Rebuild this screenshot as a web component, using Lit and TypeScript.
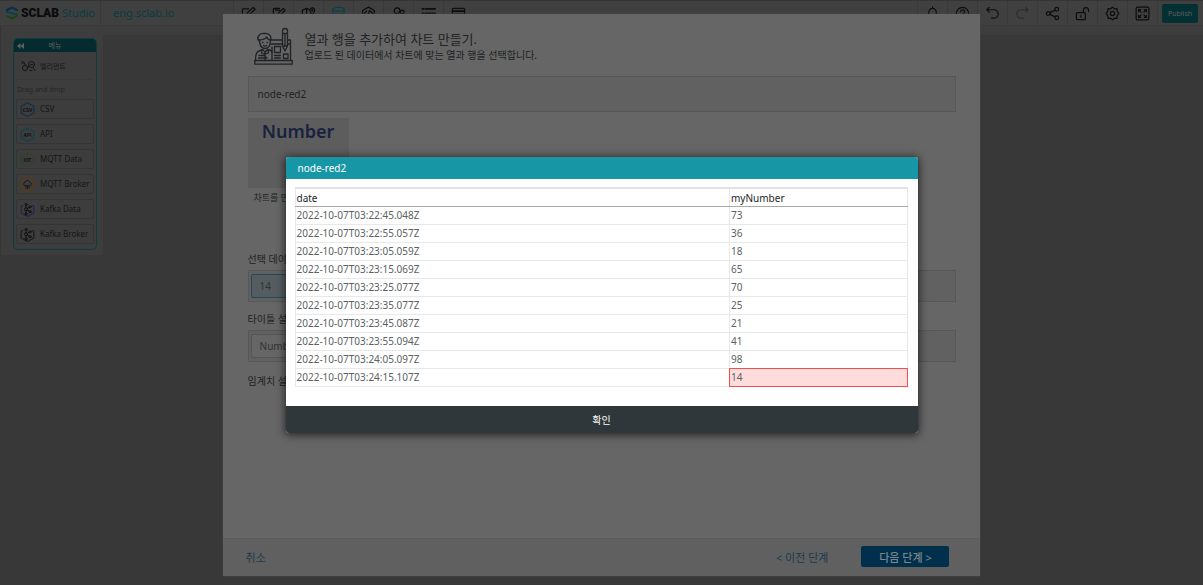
import { LitElement, html, css, svg } from "lit";
import { customElement } from "lit/decorators.js";
import { classMap } from "lit/directives/class-map.js";

type Row = { date: string; value: number };

const ROWS: Row[] = [
  { date: "2022-10-07T03:22:45.048Z", value: 73 },
  { date: "2022-10-07T03:22:55.057Z", value: 36 },
  { date: "2022-10-07T03:23:05.059Z", value: 18 },
  { date: "2022-10-07T03:23:15.069Z", value: 65 },
  { date: "2022-10-07T03:23:25.077Z", value: 70 },
  { date: "2022-10-07T03:23:35.077Z", value: 25 },
  { date: "2022-10-07T03:23:45.087Z", value: 21 },
  { date: "2022-10-07T03:23:55.094Z", value: 41 },
  { date: "2022-10-07T03:24:05.097Z", value: 98 },
  { date: "2022-10-07T03:24:15.107Z", value: 14 },
];

// Toolbar glyphs, drawn on a 16 x 16 grid.
const glyphs = {
  edit: svg`<path d="M8 3H2.500a1 1 0 0 0-1 1v9.500a1 1 0 0 0 1 1H12a1 1 0 0 0 1-1V9M6 10l.6-2.600L13 1.500l2 2L8.500 9.500z"/>`,
  form: svg`<path d="M9 2.500H3.500a1 1 0 0 0-1 1v10a1 1 0 0 0 1 1h9a1 1 0 0 0 1-1V9M5 2.500v2h4M7.500 10l.6-2.600L13 2.500l2 2L10 9.500z"/>`,
  map: svg`<path d="M9 4 6 2.500 1.500 4.500v9L6 12l4 2 4.500-2V9.500M6 2.500V12M10 9v5M12 9.500C10.500 7.500 9.500 6 9.500 4.500a2.500 2.500 0 0 1 5 0c0 1.500-1 3-2.500 5z"/><circle cx="12" cy="4.500" r=".6"/>`,
  data: svg`<ellipse cx="8" cy="3.500" rx="6" ry="2"/><path d="M2 3.500v9c0 1.200 2.600 2 6 2s6-.8 6-2v-9M2 6.500c0 1.200 2.600 2 6 2s6-.8 6-2M2 9.500c0 1.200 2.600 2 6 2s6-.8 6-2"/>`,
  code: svg`<path d="m8 1.200 6.200 3.500v6.600L8 14.800l-6.200-3.500V4.700zM5.800 5.500 3.800 8l2 2.500M10.200 5.500l2 2.500-2 2.500M9 5l-2 6"/>`,
  users: svg`<circle cx="6.500" cy="5" r="3"/><circle cx="12" cy="6.500" r="2"/><path d="M1.500 14c0-3.500 2-5 5-5s5 1.500 5 5zM11 10c2.500-.3 4 1.200 4 4h-2"/>`,
  list: svg`<path class="bold" d="M1.500 3h1.500M5 3h10M1.500 8H3M5 8h10M1.500 13H3M5 13h10"/>`,
  card: svg`<rect x="1.500" y="2.500" width="13" height="11" rx="1"/><path class="bold" d="M2 5.500h12M4 9h4M10 9h2.500"/>`,
  bell: svg`<path d="M2.500 12.500h11c-1.500-1.500-1.500-3-1.500-5.500 0-2.500-1.500-4.500-4-4.500S4 4.500 4 7c0 2.500 0 4-1.500 5.500zM8 2.500V1M6.500 14.500h3"/>`,
  help: svg`<circle cx="8" cy="8" r="6.500"/><path d="M5.800 6.300C5.800 3.300 10.200 3.500 10.200 6.300 10.200 7.800 8 8 8 9.500M8 11v1.200"/>`,
  undo: svg`<path d="M4.500 1.500 2 4l2.500 2.500M2 4h7.500a4.500 4.500 0 0 1 0 9H7"/>`,
  redo: svg`<path d="M11.500 1.500 14 4l-2.500 2.500M14 4H6.500a4.500 4.500 0 0 0 0 9H9"/>`,
  share: svg`<circle cx="3.500" cy="8" r="2"/><circle cx="12.500" cy="3.500" r="2"/><circle cx="12.500" cy="12.500" r="2"/><path d="m5.300 7.100 5.400-2.700M5.300 8.900l5.400 2.700"/>`,
  unlock: svg`<rect x="1.500" y="7" width="9.500" height="7.500" rx="1"/><path d="M9 7V4.500a2.700 2.700 0 0 1 5.400 0V6M6.200 10v1.800"/>`,
  gear: svg`<circle cx="8" cy="8" r="2.200"/><path d="M8 1.200 10 3l2.800-.1L13 5.800 14.800 8 13 10.200l-.2 2.900L10 13l-2 1.800L6 13l-2.800.1-.2-2.900L1.200 8 3 5.800l.2-2.900L6 3z"/>`,
  full: svg`<rect x="1.200" y="1.200" width="13.600" height="13.600" rx="1.500"/><path d="M3.800 6V3.800H6M10 3.800h2.200V6M12.200 10v2.200H10M6 12.200H3.800V10M4 4l2.500 2.500M12 4 9.500 6.500M12 12 9.500 9.500M4 12l2.500-2.500"/>`,
};
type Glyph = keyof typeof glyphs;

const MAIN_TOOLS: [Glyph, string][] = [
  ["edit", "Edit"], ["form", "Form"], ["map", "Map"], ["data", "Data"],
  ["code", "Code"], ["users", "Users"], ["list", "List"], ["card", "Card"],
];
const SIDE_TOOLS: [Glyph, string][] = [
  ["bell", "Notifications"], ["help", "Help"], ["undo", "Undo"], ["redo", "Redo"],
  ["share", "Share"], ["unlock", "Lock"], ["gear", "Settings"], ["full", "Full screen"],
];

const SOURCES = [
  { label: "CSV", tone: "#172f49", kind: "CSV" },
  { label: "API", tone: "#123f4c", kind: "API" },
  { label: "MQTT Data", tone: "#2a4524", kind: "IOT" },
  { label: "MQTT Broker", tone: "#5b3a14", kind: "cloud" },
  { label: "Kafka Data", tone: "#24264f", kind: "kafka" },
  { label: "Kafka Broker", tone: "#1d1d1d", kind: "kafka" },
];

const base = css`
  :host {
    box-sizing: border-box;
    font-family: "Noto Sans", "Noto Sans CJK KR", sans-serif;
  }
  *,
  *::before,
  *::after {
    box-sizing: border-box;
  }
  button {
    font: inherit;
    border: 0;
    padding: 0;
    background: none;
    color: inherit;
  }
  svg {
    display: block;
    flex: none;
    fill: none;
    stroke: currentColor;
    stroke-linecap: round;
    stroke-linejoin: round;
  }
`;

@customElement("top-bar")
class TopBar extends LitElement {
  static styles = [
    base,
    css`
      :host {
        display: flex;
        align-items: stretch;
        height: 26px;
        background: #404040;
        border-top: 1px solid #353535;
        border-bottom: 1px solid #3a3a3a;
        color: #0d0d0d;
      }
      .logo {
        display: flex;
        flex: none;
        align-items: center;
        gap: 3px;
        width: 101px;
        padding-left: 6px;
        border-right: 1px solid #383838;
      }
      .name {
        font: 900 12px/24px Roboto, "Liberation Sans", sans-serif;
        color: #0a0a0a;
      }
      .studio,
      .site {
        font-size: 11px;
        line-height: 24px;
        color: #073d42;
      }
      .site {
        flex: none;
        width: 132px;
        padding-left: 12px;
        text-decoration: none;
      }
      .tools {
        display: flex;
      }
      .tools button {
        display: grid;
        place-items: center;
        width: 30px;
        border-left: 1px solid #393939;
      }
      .tools .active {
        color: #0a4147;
      }
      .tools .off {
        color: #2c2c2c;
      }
      .right {
        margin-left: auto;
      }
      .bold {
        stroke-width: 2;
      }
      .end {
        display: flex;
        align-items: center;
        padding: 0 5px 0 4px;
        border-left: 1px solid #393939;
      }
      .publish {
        width: 36px;
        height: 19px;
        border-radius: 2px;
        background: #042f33;
        color: #5a6060;
        font-size: 7px;
      }
    `,
  ];

  private tool([name, label]: [Glyph, string]) {
    return html`<button aria-label=${label} class=${classMap({ active: name === "data", off: name === "redo" })}>
      <svg width="15" height="15" viewBox="0 0 16 16" stroke-width="1.300">${glyphs[name]}</svg>
    </button>`;
  }

  render() {
    return html`
      <div class="logo">
        <svg width="12" height="14" viewBox="0 0 12 14" stroke-width="2">
          <path stroke="#0c2c4c" d="M11 4 6 1.500 1 4v2" />
          <path stroke="#07434a" d="M1 6l10 2.500" />
          <path stroke="#214018" d="M11 8.500v1.500l-5 2.500-5-2.500" />
        </svg>
        <span class="name">SCLAB</span>
        <span class="studio">Studio</span>
      </div>
      <a class="site" href="#">eng.sclab.io</a>
      <div class="tools">${MAIN_TOOLS.map((t) => this.tool(t))}</div>
      <div class="tools right">${SIDE_TOOLS.map((t) => this.tool(t))}</div>
      <div class="end"><button class="publish">Publish</button></div>
    `;
  }
}

@customElement("side-menu")
class SideMenu extends LitElement {
  static styles = [
    base,
    css`
      :host {
        display: block;
        width: 103px;
        padding: 12px 6px 5px 12px;
        background: #3d3d3d;
        color: #151515;
        border-left: 1px solid #353535;
      }
      .panel {
        border: 1px solid #0d3c41;
        border-radius: 5px;
        overflow: hidden;
      }
      .head {
        display: grid;
        grid-template-columns: 10px 1fr 10px;
        align-items: center;
        height: 13px;
        padding: 0 3px;
        background: #052b2e;
        color: #5c6161;
        font-size: 7px;
        line-height: 13px;
        text-align: center;
      }
      .element {
        display: flex;
        align-items: center;
        gap: 4px;
        height: 28px;
        margin: 0 3px;
        padding-left: 4px;
        border-bottom: 1px solid #383838;
        font-size: 7px;
      }
      .hint {
        height: 19px;
        padding-left: 3px;
        color: #252525;
        font-size: 7px;
        line-height: 20px;
      }
      .list {
        display: flex;
        flex-direction: column;
        gap: 5px;
        padding: 0 2px 5px;
      }
      .item {
        display: flex;
        align-items: center;
        gap: 5px;
        height: 20px;
        padding-left: 3px;
        border: 1px solid #343434;
        border-radius: 2px;
        font-size: 8px;
        line-height: 18px;
      }
      .mark {
        font: bold 5px Roboto, "Liberation Sans", sans-serif;
        fill: #111;
        stroke: none;
        text-anchor: middle;
      }
    `,
  ];

  private badge(kind: string, tone: string) {
    const inner =
      kind === "cloud"
        ? svg`<path stroke="#111" stroke-width=".8" d="M4.500 8.500a1.700 1.700 0 0 1 .6-3.200 2.500 2.500 0 0 1 4.800 0 1.700 1.700 0 0 1 .6 3.200zM6 9.500v1.500M7.500 9.500v2M9 9.500v1.500"/>`
        : kind === "kafka"
          ? svg`<g stroke="#111"><circle cx="6" cy="2.500" r="1.100"/><circle cx="6" cy="7.200" r="1.500"/><circle cx="6" cy="12" r="1.100"/><circle cx="10" cy="4.800" r="1.100"/><circle cx="10" cy="9.700" r="1.100"/><path d="M6 3.700v1.900M6 8.800v2M7.400 6.400 9 5.400M7.400 8 9 9.100"/></g>`
          : svg`<text class="mark" x="7.500" y="9.500">${kind}</text>`;
    const frame =
      kind === "kafka"
        ? "M2.500 3.500 1.200 4.300v6.700l6.300 3.500 6.300-3.500V4.300L12.500 3.500"
        : kind === "API" || kind === "IOT"
          ? "M4.500 2.500 1.200 4.300v6.700l6.300 3.500 6.300-3.500V4.300l-3.300-1.800M7.500 3.500V1M6.500 2l1-1 1 1"
          : "M7.500.8l6.300 3.500v6.700l-6.300 3.500L1.200 11V4.300z";
    return html`<svg width="15" height="15" viewBox="0 0 15 15"><path stroke=${tone} stroke-width="1.300" d=${frame} />${inner}</svg>`;
  }

  render() {
    return html`
      <nav class="panel">
        <div class="head">
          <svg width="7" height="6" viewBox="0 0 7 6"><path fill="#5c6161" stroke="none" d="M3.500 0v6L0 3zM7 0v6L3.500 3z" /></svg>
          <span>메뉴</span>
        </div>
        <div class="element">
          <svg width="15" height="12" viewBox="0 0 15 12">
            <circle cx="4" cy="8" r="2.600" /><circle cx="10.500" cy="4.500" r="3" />
            <path d="M1 1.500l2 1 1.500 3M1 3.500l2-1M6.500 7l1.500-1M9.500 4.500h2M12 7.500l2 3M9 10.500h2" />
          </svg>
          <span>엘리먼트</span>
        </div>
        <div class="hint">Drag and drop</div>
        <div class="list">
          ${SOURCES.map((s) => html`<button class="item">${this.badge(s.kind, s.tone)}<span>${s.label}</span></button>`)}
        </div>
      </nav>
    `;
  }
}

@customElement("chart-wizard")
class ChartWizard extends LitElement {
  static styles = [
    base,
    css`
      :host {
        display: flex;
        flex-direction: column;
        background: #666;
        color: #202224;
        font-size: 10px;
        box-shadow: 0 0 2px #4a4a4a;
      }
      .content {
        flex: 1;
        display: flex;
        flex-direction: column;
        align-items: stretch;
        padding: 12px 24px 0 25px;
      }
      .intro {
        display: flex;
        align-items: center;
        gap: 12px;
        height: 40px;
        padding-left: 6px;
        margin-bottom: 10px;
      }
      h1,
      p,
      h2 {
        margin: 0;
        font-weight: 400;
      }
      h1 {
        font-size: 13px;
        line-height: 18px;
      }
      p {
        line-height: 14px;
      }
      .box {
        background: #616161;
        border: 1px solid #575757;
      }
      .source {
        height: 36px;
        padding-left: 9px;
        line-height: 34px;
      }
      .chart {
        width: 101px;
        height: 70px;
        margin-top: 6px;
        background: #5d5d5d;
        color: #18223f;
        font-size: 18px;
        font-weight: 600;
        line-height: 26px;
        text-align: center;
      }
      .caption {
        height: 60px;
        padding: 2px 0 0 6px;
        font-size: 9px;
        line-height: 16px;
      }
      label {
        line-height: 22px;
      }
      h2 {
        font-size: 10px;
        line-height: 26px;
      }
      .field {
        height: 32px;
        padding: 3px 2px;
        margin-bottom: 6px;
      }
      .field input {
        display: block;
        width: 72px;
        height: 24px;
        padding: 0 8px;
        border: 1px solid #555;
        border-radius: 2px;
        background: #666;
        color: #303234;
        font: inherit;
      }
      .field .picked {
        border-color: #1f4a5c;
        background: #555d61;
      }
      footer {
        display: flex;
        align-items: center;
        height: 38px;
        padding: 0 31px 2px 23px;
        background: #606060;
        border-top: 1px solid #5c5c5c;
        color: #1d3b4d;
        font-size: 11px;
      }
      .prev {
        margin-left: auto;
      }
      .next {
        width: 88px;
        height: 21px;
        margin-left: 33px;
        border-radius: 2px;
        background: #00304b;
        color: #7d878c;
        font-weight: 500;
      }
    `,
  ];

  render() {
    return html`
      <div class="content">
        <div class="intro">
          <svg width="39" height="38" viewBox="0 0 39 38" stroke="#1b2426" stroke-width="1.300">
            <path d="M.8 33.500h37.400v3.700H.8zM17 13h11M34 13h2.500v20.500M17 17h11M34 17h2M18 20v13" />
            <path d="M28.500 4a2.500 2.500 0 0 1 5 0v15L31 24l-2.500-5zM28.500 6.500h5M31 7v12M28.500 19h5" />
            <path d="M20.500 19.500h6v6h-6zM20.500 28.500h6M20.500 31h6M29.500 27h4.500v4.500h-4.500z" />
            <path d="M5 14c-3-3 0-8 5-7.500 5-1 8 3 6.500 7M5.500 13c4 0 6-1.500 7-3 1 2 2.500 3 4 3 0 6-2 8.500-5.500 8.500S5.500 18 5.500 13zM8.500 15.500h.5M13 15.500h.5M9.500 18.500c1 .8 2 .8 3 0" />
            <path d="M1.500 33.500c0-7 1-9.500 7.500-11l2 3 2.500-3c3 .5 4.500 1.500 4.500 3M11 25.500v8M5 28.500h5l3 2.500H4.500M8 23l-.5 3 3 1M14 23l.5 3-3 1" />
          </svg>
          <div>
            <h1>열과 행을 추가하여 차트 만들기.</h1>
            <p>업로드 된 데이터에서 차트에 맞는 열과 행을 선택합니다.</p>
          </div>
        </div>
        <div class="box source">node-red2</div>
        <div class="chart">Number</div>
        <div class="caption">차트를 만</div>
        <label for="data">선택 데이터</label>
        <div class="box field"><input id="data" class="picked" value="14" /></div>
        <label for="title">타이틀 설정</label>
        <div class="box field"><input id="title" value="Number" /></div>
        <h2>임계치 설정</h2>
      </div>
      <footer>
        <button>취소</button>
        <button class="prev">&lt; 이전 단계</button>
        <button class="next">다음 단계 &gt;</button>
      </footer>
    `;
  }
}

@customElement("data-dialog")
class DataDialog extends LitElement {
  static styles = [
    base,
    css`
      :host {
        display: block;
        background: #fff;
        border-radius: 3px;
        overflow: hidden;
        box-shadow: 0 1px 8px 1px rgba(0, 0, 0, 0.65);
        font-size: 10px;
      }
      header {
        height: 22px;
        padding-left: 12px;
        background: #1797a6;
        color: #fff;
        line-height: 22px;
      }
      .body {
        padding: 8px 10px 19px 9px;
      }
      table {
        width: 100%;
        table-layout: fixed;
        border-collapse: collapse;
        color: #5c5f63;
      }
      th,
      td {
        height: 18px;
        padding: 0 1px;
        border: 1px solid #e6e8ea;
        font-weight: 400;
        text-align: left;
        line-height: 16px;
      }
      th {
        color: #222528;
        border-top: 2px solid #e2e2e2;
        border-bottom: 1px solid #a8a8a8;
      }
      .date {
        width: 71%;
      }
      .hit {
        background: #ffdcdc;
        border: 1px double #f05050;
      }
      .ok {
        display: block;
        width: 100%;
        height: 27px;
        background: #2f373a;
        color: #fff;
        font-size: 10px;
      }
    `,
  ];

  render() {
    return html`
      <header>node-red2</header>
      <div class="body">
        <table>
          <thead>
            <tr><th class="date">date</th><th>myNumber</th></tr>
          </thead>
          <tbody>
            ${ROWS.map(
              (r, i) => html`<tr>
                <td>${r.date}</td>
                <td class=${classMap({ hit: i === ROWS.length - 1 })}>${r.value}</td>
              </tr>`,
            )}
          </tbody>
        </table>
      </div>
      <button class="ok">확인</button>
    `;
  }
}

@customElement("app-root")
class AppRoot extends LitElement {
  static styles = [
    base,
    css`
      :host {
        display: block;
        position: relative;
        min-height: 100vh;
        background: #383838;
      }
      .work {
        display: flex;
        align-items: flex-start;
      }
      .strip {
        flex: 1;
        height: 9px;
        background: #3d3d3d;
      }
      .layer {
        position: absolute;
        inset: 0;
        display: flex;
        justify-content: center;
      }
      .wizard {
        padding: 14px 0 9px;
      }
      .wizard chart-wizard {
        width: 63%;
      }
      .dialog {
        align-items: center;
        padding-top: 5px;
      }
      .dialog data-dialog {
        width: 632px;
        max-width: 100%;
      }
    `,
  ];

  render() {
    return html`
      <top-bar></top-bar>
      <div class="work">
        <side-menu></side-menu>
        <div class="strip"></div>
      </div>
      <div class="layer wizard"><chart-wizard></chart-wizard></div>
      <div class="layer dialog"><data-dialog></data-dialog></div>
    `;
  }
}
